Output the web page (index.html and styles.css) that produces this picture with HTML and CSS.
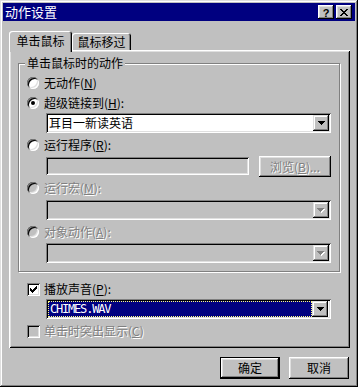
FILE: index.html
```html
<!doctype html>
<html>
<head>
<meta charset="utf-8">
<title>动作设置</title>
<link rel="stylesheet" href="styles.css">
</head>
<body>
<div class="window">
  <!-- 标题栏 -->
  <div class="titlebar">
    <span class="title">动作设置</span>
    <div class="title-btns">
      <span class="tbtn help">?</span>
      <span class="tbtn"><svg width="8" height="7" viewBox="0 0 8 7"><path d="M0 0h2v1H0zM6 0h2v1H6zM1 1h2v1H1zM5 1h2v1H5zM2 2h4v1H2zM3 3h2v1H3zM2 4h4v1H2zM1 5h2v1H1zM5 5h2v1H5zM0 6h2v1H0zM6 6h2v1H6z" fill="#000"/></svg></span>
    </div>
  </div>

  <!-- 选项卡 -->
  <div class="tabs">
    <div class="tab active">单击鼠标</div>
    <div class="tab">鼠标移过</div>
  </div>

  <div class="panel">
    <div class="group">
      <div class="legend">单击鼠标时的动作</div>

      <div class="opt"><span class="radio"></span><span>无动作(<u>N</u>)</span></div>

      <div class="opt gap4"><span class="radio on"></span><span>超级链接到(<u>H</u>):</span></div>
      <div class="combo in-group gap2">
        <span class="value">耳目一新读英语</span>
        <span class="drop"><svg width="7" height="4" viewBox="0 0 7 4"><path d="M0 0h7v1H0zM1 1h5v1H1zM2 2h3v1H2zM3 3h1v1H3z" fill="#000"/></svg></span>
      </div>

      <div class="opt gap4"><span class="radio"></span><span>运行程序(<u>R</u>):</span></div>
      <div class="prog-row">
        <div class="field"></div>
        <div class="btn browse disabled">浏览(<u>B</u>)...</div>
      </div>

      <div class="opt disabled gap3"><span class="radio"></span><span>运行宏(<u>M</u>):</span></div>
      <div class="combo disabled in-group gap4">
        <span class="value"></span>
        <span class="drop"><svg width="8" height="5" viewBox="0 0 8 5"><path d="M1 1h7v1H1zM2 2h5v1H2zM3 3h3v1H3zM4 4h1v1H4z" fill="#fff"/><path d="M0 0h7v1H0zM1 1h5v1H1zM2 2h3v1H2zM3 3h1v1H3z" fill="#808080"/></svg></span>
      </div>

      <div class="opt disabled gap4"><span class="radio"></span><span>对象动作(<u>A</u>):</span></div>
      <div class="combo disabled in-group gap3">
        <span class="value"></span>
        <span class="drop"><svg width="8" height="5" viewBox="0 0 8 5"><path d="M1 1h7v1H1zM2 2h5v1H2zM3 3h3v1H3zM4 4h1v1H4z" fill="#fff"/><path d="M0 0h7v1H0zM1 1h5v1H1zM2 2h3v1H2zM3 3h1v1H3z" fill="#808080"/></svg></span>
      </div>
    </div>

    <div class="check-row first">
      <span class="check"><svg width="7" height="7" viewBox="0 0 7 7"><path d="M6 0h1v1H6zM5 1h2v1H5zM0 2h1v1H0zM4 2h3v1H4zM0 3h2v1H0zM3 3h3v1H3zM0 4h5v1H0zM1 5h3v1H1zM2 6h1v1H2z" fill="#000"/></svg></span>
      <span>播放声音(<u>P</u>):</span>
    </div>
    <div class="combo sound">
      <span class="value sel">CHIMES.WAV</span>
      <span class="drop"><svg width="7" height="4" viewBox="0 0 7 4"><path d="M0 0h7v1H0zM1 1h5v1H1zM2 2h3v1H2zM3 3h1v1H3z" fill="#000"/></svg></span>
    </div>
    <div class="check-row disabled last">
      <span class="check"></span>
      <span>单击时突出显示(<u>C</u>)</span>
    </div>
  </div>

  <!-- 确定 / 取消 -->
  <div class="actions">
    <div class="btn default">确定</div>
    <div class="btn">取消</div>
  </div>
</div>
</body>
</html>
```

FILE: styles.css
```css
* {
	box-sizing: border-box;
}

body {
	margin: 0;
	background: #c0c0c0;
	font-family: "Noto Sans CJK SC", "Liberation Sans", sans-serif;
	font-size: 12px;
	line-height: 16px;
	color: #000;
}

.window {
	width: 358px;
	height: 387px;
	padding: 3px;
	background: #c0c0c0;
	box-shadow: inset -1px -1px #000, inset 1px 1px #dfdfdf, inset -2px -2px #808080, inset 2px 2px #fff;
}

.titlebar {
	height: 18px;
	background: #000080;
	color: #fff;
	display: flex;
	align-items: center;
	justify-content: space-between;
	padding: 0 3px 0 2px;
}

.title {
	font-size: 13px;
}

.title-btns {
	display: flex;
	gap: 2px;
}

.tbtn {
	width: 16px;
	height: 14px;
	background: #c0c0c0;
	color: #000;
	display: flex;
	align-items: center;
	justify-content: center;
	box-shadow: inset -1px -1px #000, inset 1px 1px #fff, inset -2px -2px #808080, inset 2px 2px #dfdfdf;
}

.tbtn.help {
	font: bold 11px "Liberation Sans", sans-serif;
	padding-top: 1px;
}

/* 选项卡 */
.tabs {
	display: flex;
	align-items: flex-end;
	height: 19px;
	margin: 10px 0 0 6px;
}

.tab {
	width: 59px;
	height: 17px;
	padding-top: 1px;
	text-align: center;
	line-height: 15px;
	background: #c0c0c0;
	border-radius: 3px 3px 0 0;
	box-shadow: inset 1px 1px #fff, inset -1px 0 #000, inset -2px 0 #808080;
}

.tab.active {
	width: 63px;
	height: 21px;
	margin-bottom: -2px;
	padding-top: 2px;
	line-height: 16px;
	position: relative;
	z-index: 1;
}

.panel {
	width: 341px;
	margin-left: 6px;
	padding: 13px 0 9px 9px;
	box-shadow: inset 1px 1px #fff, inset -1px -1px #000, inset 2px 2px #dfdfdf, inset -2px -2px #808080;
}

.group {
	position: relative;
	width: 322px;
	border: 1px solid #808080;
	box-shadow: inset 1px 1px #fff, 1px 1px #fff;
	padding: 11px 8px 8px 8px;
}

.legend {
	position: absolute;
	top: -9px;
	left: 6px;
	padding: 0 2px;
	background: #c0c0c0;
}

.opt {
	display: flex;
	align-items: center;
	gap: 5px;
	height: 16px;
}

.gap2 { margin-top: 2px; }
.gap3 { margin-top: 3px; }
.gap4 { margin-top: 4px; }

.radio {
	flex: none;
	position: relative;
	width: 12px;
	height: 12px;
	border-radius: 50%;
	background: #fff;
	box-shadow: inset 1px 1px #808080, inset -1px -1px #fff, inset 2px 2px #000, inset -2px -2px #dfdfdf;
}

.radio.on::after {
	content: "";
	position: absolute;
	left: 4px;
	top: 4px;
	width: 4px;
	height: 4px;
	border-radius: 50%;
	background: #000;
}

.disabled {
	color: #808080;
	text-shadow: 1px 1px 0 #fff;
}

.opt.disabled .radio,
.check-row.disabled .check {
	background: #c0c0c0;
}

.combo {
	display: flex;
	height: 20px;
	padding: 2px;
	background: #fff;
	box-shadow: inset 1px 1px #808080, inset -1px -1px #fff, inset 2px 2px #000, inset -2px -2px #dfdfdf;
}

.combo.in-group {
	margin-left: 19px;
}

.combo.disabled {
	background: #c0c0c0;
}

.combo .value {
	flex: 1;
	padding-left: 1px;
	line-height: 16px;
	white-space: nowrap;
}

.drop {
	flex: none;
	width: 16px;
	height: 16px;
	background: #c0c0c0;
	display: flex;
	align-items: center;
	justify-content: center;
	box-shadow: inset -1px -1px #000, inset 1px 1px #dfdfdf, inset -2px -2px #808080, inset 2px 2px #fff;
}

.prog-row {
	display: flex;
	gap: 10px;
	height: 21px;
	margin: 3px 0 0 19px;
}

.field {
	flex: 1;
	height: 18px;
	margin-top: 1px;
	background: #c0c0c0;
	box-shadow: inset 1px 1px #808080, inset -1px -1px #fff, inset 2px 2px #000, inset -2px -2px #dfdfdf;
}

.btn {
	width: 60px;
	height: 22px;
	display: flex;
	align-items: center;
	justify-content: center;
	background: #c0c0c0;
	box-shadow: inset -1px -1px #000, inset 1px 1px #fff, inset -2px -2px #808080, inset 2px 2px #dfdfdf;
}

.btn.browse {
	width: 72px;
	height: 21px;
}

.btn.default {
	border: 1px solid #000;
}

.check-row {
	display: flex;
	align-items: center;
	gap: 4px;
	height: 16px;
	margin-left: 9px;
}

.check-row.first {
	margin-top: 9px;
}

.check-row.last {
	margin-top: 4px;
}

.check {
	flex: none;
	width: 13px;
	height: 13px;
	background: #fff;
	display: flex;
	align-items: center;
	justify-content: center;
	box-shadow: inset 1px 1px #808080, inset -1px -1px #fff, inset 2px 2px #000, inset -2px -2px #dfdfdf;
}

.combo.sound {
	width: 285px;
	margin: 2px 0 0 28px;
}

.combo .value.sel {
	flex: none;
	width: 264px;
	padding-left: 2px;
	background: #000080;
	color: #fff;
	outline: 1px dotted #ffff80;
	outline-offset: -1px;
	font-family: "DejaVu Sans Mono", monospace;
	letter-spacing: -1.2px;
}

.actions {
	display: flex;
	justify-content: flex-end;
	gap: 9px;
	margin-top: 9px;
	padding-right: 6px;
}
```
